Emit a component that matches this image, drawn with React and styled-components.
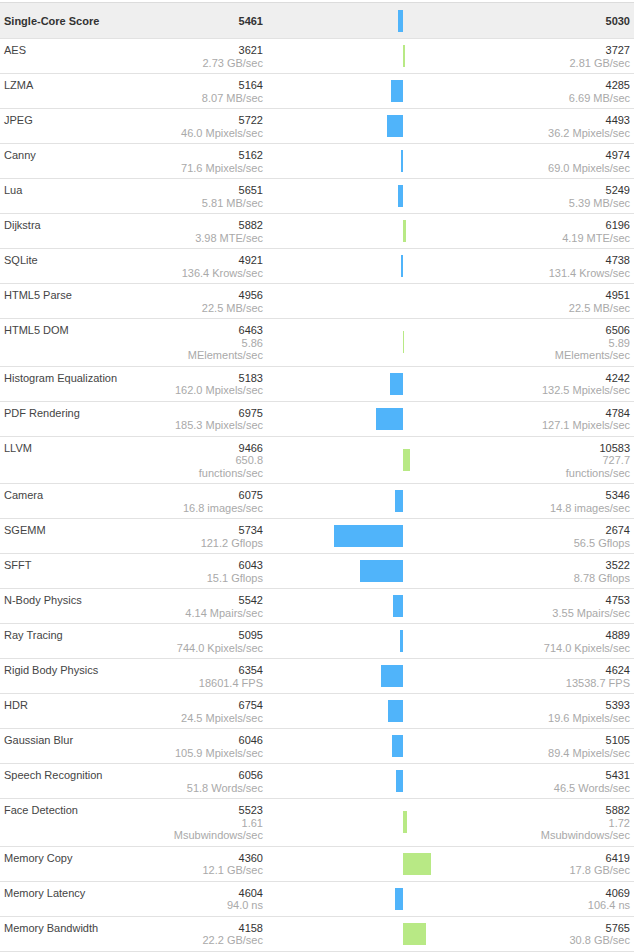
import React from "react";
import styled, { createGlobalStyle } from "styled-components";

const GlobalStyle = createGlobalStyle`
  html, body {
    margin: 0;
    padding: 0;
    background: #ffffff;
  }
  body {
    font-family: "Liberation Sans", Arial, sans-serif;
    font-size: 11px;
    color: #333;
  }
`;

const SCALE = 60;

const header = { name: "Single-Core Score", a: 5461, b: 5030 };

const rows = [
  { name: "AES", a: 3621, ua: "2.73 GB/sec", b: 3727, ub: "2.81 GB/sec" },
  { name: "LZMA", a: 5164, ua: "8.07 MB/sec", b: 4285, ub: "6.69 MB/sec" },
  { name: "JPEG", a: 5722, ua: "46.0 Mpixels/sec", b: 4493, ub: "36.2 Mpixels/sec" },
  { name: "Canny", a: 5162, ua: "71.6 Mpixels/sec", b: 4974, ub: "69.0 Mpixels/sec" },
  { name: "Lua", a: 5651, ua: "5.81 MB/sec", b: 5249, ub: "5.39 MB/sec" },
  { name: "Dijkstra", a: 5882, ua: "3.98 MTE/sec", b: 6196, ub: "4.19 MTE/sec" },
  { name: "SQLite", a: 4921, ua: "136.4 Krows/sec", b: 4738, ub: "131.4 Krows/sec" },
  { name: "HTML5 Parse", a: 4956, ua: "22.5 MB/sec", b: 4951, ub: "22.5 MB/sec" },
  { name: "HTML5 DOM", a: 6463, ua: "5.86 MElements/sec", b: 6506, ub: "5.89 MElements/sec" },
  { name: "Histogram Equalization", a: 5183, ua: "162.0 Mpixels/sec", b: 4242, ub: "132.5 Mpixels/sec" },
  { name: "PDF Rendering", a: 6975, ua: "185.3 Mpixels/sec", b: 4784, ub: "127.1 Mpixels/sec" },
  { name: "LLVM", a: 9466, ua: "650.8 functions/sec", b: 10583, ub: "727.7 functions/sec" },
  { name: "Camera", a: 6075, ua: "16.8 images/sec", b: 5346, ub: "14.8 images/sec" },
  { name: "SGEMM", a: 5734, ua: "121.2 Gflops", b: 2674, ub: "56.5 Gflops" },
  { name: "SFFT", a: 6043, ua: "15.1 Gflops", b: 3522, ub: "8.78 Gflops" },
  { name: "N-Body Physics", a: 5542, ua: "4.14 Mpairs/sec", b: 4753, ub: "3.55 Mpairs/sec" },
  { name: "Ray Tracing", a: 5095, ua: "744.0 Kpixels/sec", b: 4889, ub: "714.0 Kpixels/sec" },
  { name: "Rigid Body Physics", a: 6354, ua: "18601.4 FPS", b: 4624, ub: "13538.7 FPS" },
  { name: "HDR", a: 6754, ua: "24.5 Mpixels/sec", b: 5393, ub: "19.6 Mpixels/sec" },
  { name: "Gaussian Blur", a: 6046, ua: "105.9 Mpixels/sec", b: 5105, ub: "89.4 Mpixels/sec" },
  { name: "Speech Recognition", a: 6056, ua: "51.8 Words/sec", b: 5431, ub: "46.5 Words/sec" },
  { name: "Face Detection", a: 5523, ua: "1.61 Msubwindows/sec", b: 5882, ub: "1.72 Msubwindows/sec" },
  { name: "Memory Copy", a: 4360, ua: "12.1 GB/sec", b: 6419, ub: "17.8 GB/sec" },
  { name: "Memory Latency", a: 4604, ua: "94.0 ns", b: 4069, ub: "106.4 ns" },
  { name: "Memory Bandwidth", a: 4158, ua: "22.2 GB/sec", b: 5765, ub: "30.8 GB/sec" },
];

const Page = styled.div`
  padding-top: 2px;
`;

const Table = styled.div`
  width: 634px;
  border-top: 1px solid #dcdcdc;
`;

const Row = styled.div`
  display: grid;
  grid-template-columns: 169px 98px 269px 98px;
  border-bottom: 1px solid #e2e2e2;
  background: ${(p) => (p.$head ? "#efefef" : "#ffffff")};
  min-height: ${(p) => (p.$head ? "35px" : "auto")};
  align-items: ${(p) => (p.$head ? "center" : "stretch")};
  font-weight: ${(p) => (p.$head ? "bold" : "normal")};
  line-height: 12.5px;
`;

const NameCell = styled.div`
  padding: 5px 0 4px 4px;
  color: ${(p) => (p.$head ? "#333" : "#444")};
`;

const ScoreCell = styled.div`
  padding: 5px 4px 4px 0;
  text-align: right;
  color: #333;
`;

const Unit = styled.div`
  color: #a9a9a9;
`;

const BarCell = styled.div`
  display: grid;
  grid-template-columns: 136px 133px;
  align-items: center;
`;

const Half = styled.div`
  display: flex;
  justify-content: ${(p) => (p.$side === "left" ? "flex-end" : "flex-start")};
`;

const Bar = styled.div`
  height: 22px;
  background: ${(p) => (p.$side === "left" ? "#50b4fa" : "#b8e985")};
`;

function Bars({ a, b }) {
  const left = a > b ? (a / b - 1) * SCALE : 0;
  const right = b > a ? (b / a - 1) * SCALE : 0;
  return (
    <BarCell>
      <Half $side="left">
        {left > 0 && <Bar $side="left" style={{ width: left }} />}
      </Half>
      <Half $side="right">
        {right > 0 && <Bar $side="right" style={{ width: right }} />}
      </Half>
    </BarCell>
  );
}

export default function App() {
  return (
    <Page>
      <GlobalStyle />
      <Table>
        <Row $head>
          <NameCell $head>{header.name}</NameCell>
          <ScoreCell>{header.a}</ScoreCell>
          <Bars a={header.a} b={header.b} />
          <ScoreCell>{header.b}</ScoreCell>
        </Row>
        {rows.map((r) => (
          <Row key={r.name}>
            <NameCell>{r.name}</NameCell>
            <ScoreCell>
              {r.a}
              <Unit>{r.ua}</Unit>
            </ScoreCell>
            <Bars a={r.a} b={r.b} />
            <ScoreCell>
              {r.b}
              <Unit>{r.ub}</Unit>
            </ScoreCell>
          </Row>
        ))}
      </Table>
    </Page>
  );
}
